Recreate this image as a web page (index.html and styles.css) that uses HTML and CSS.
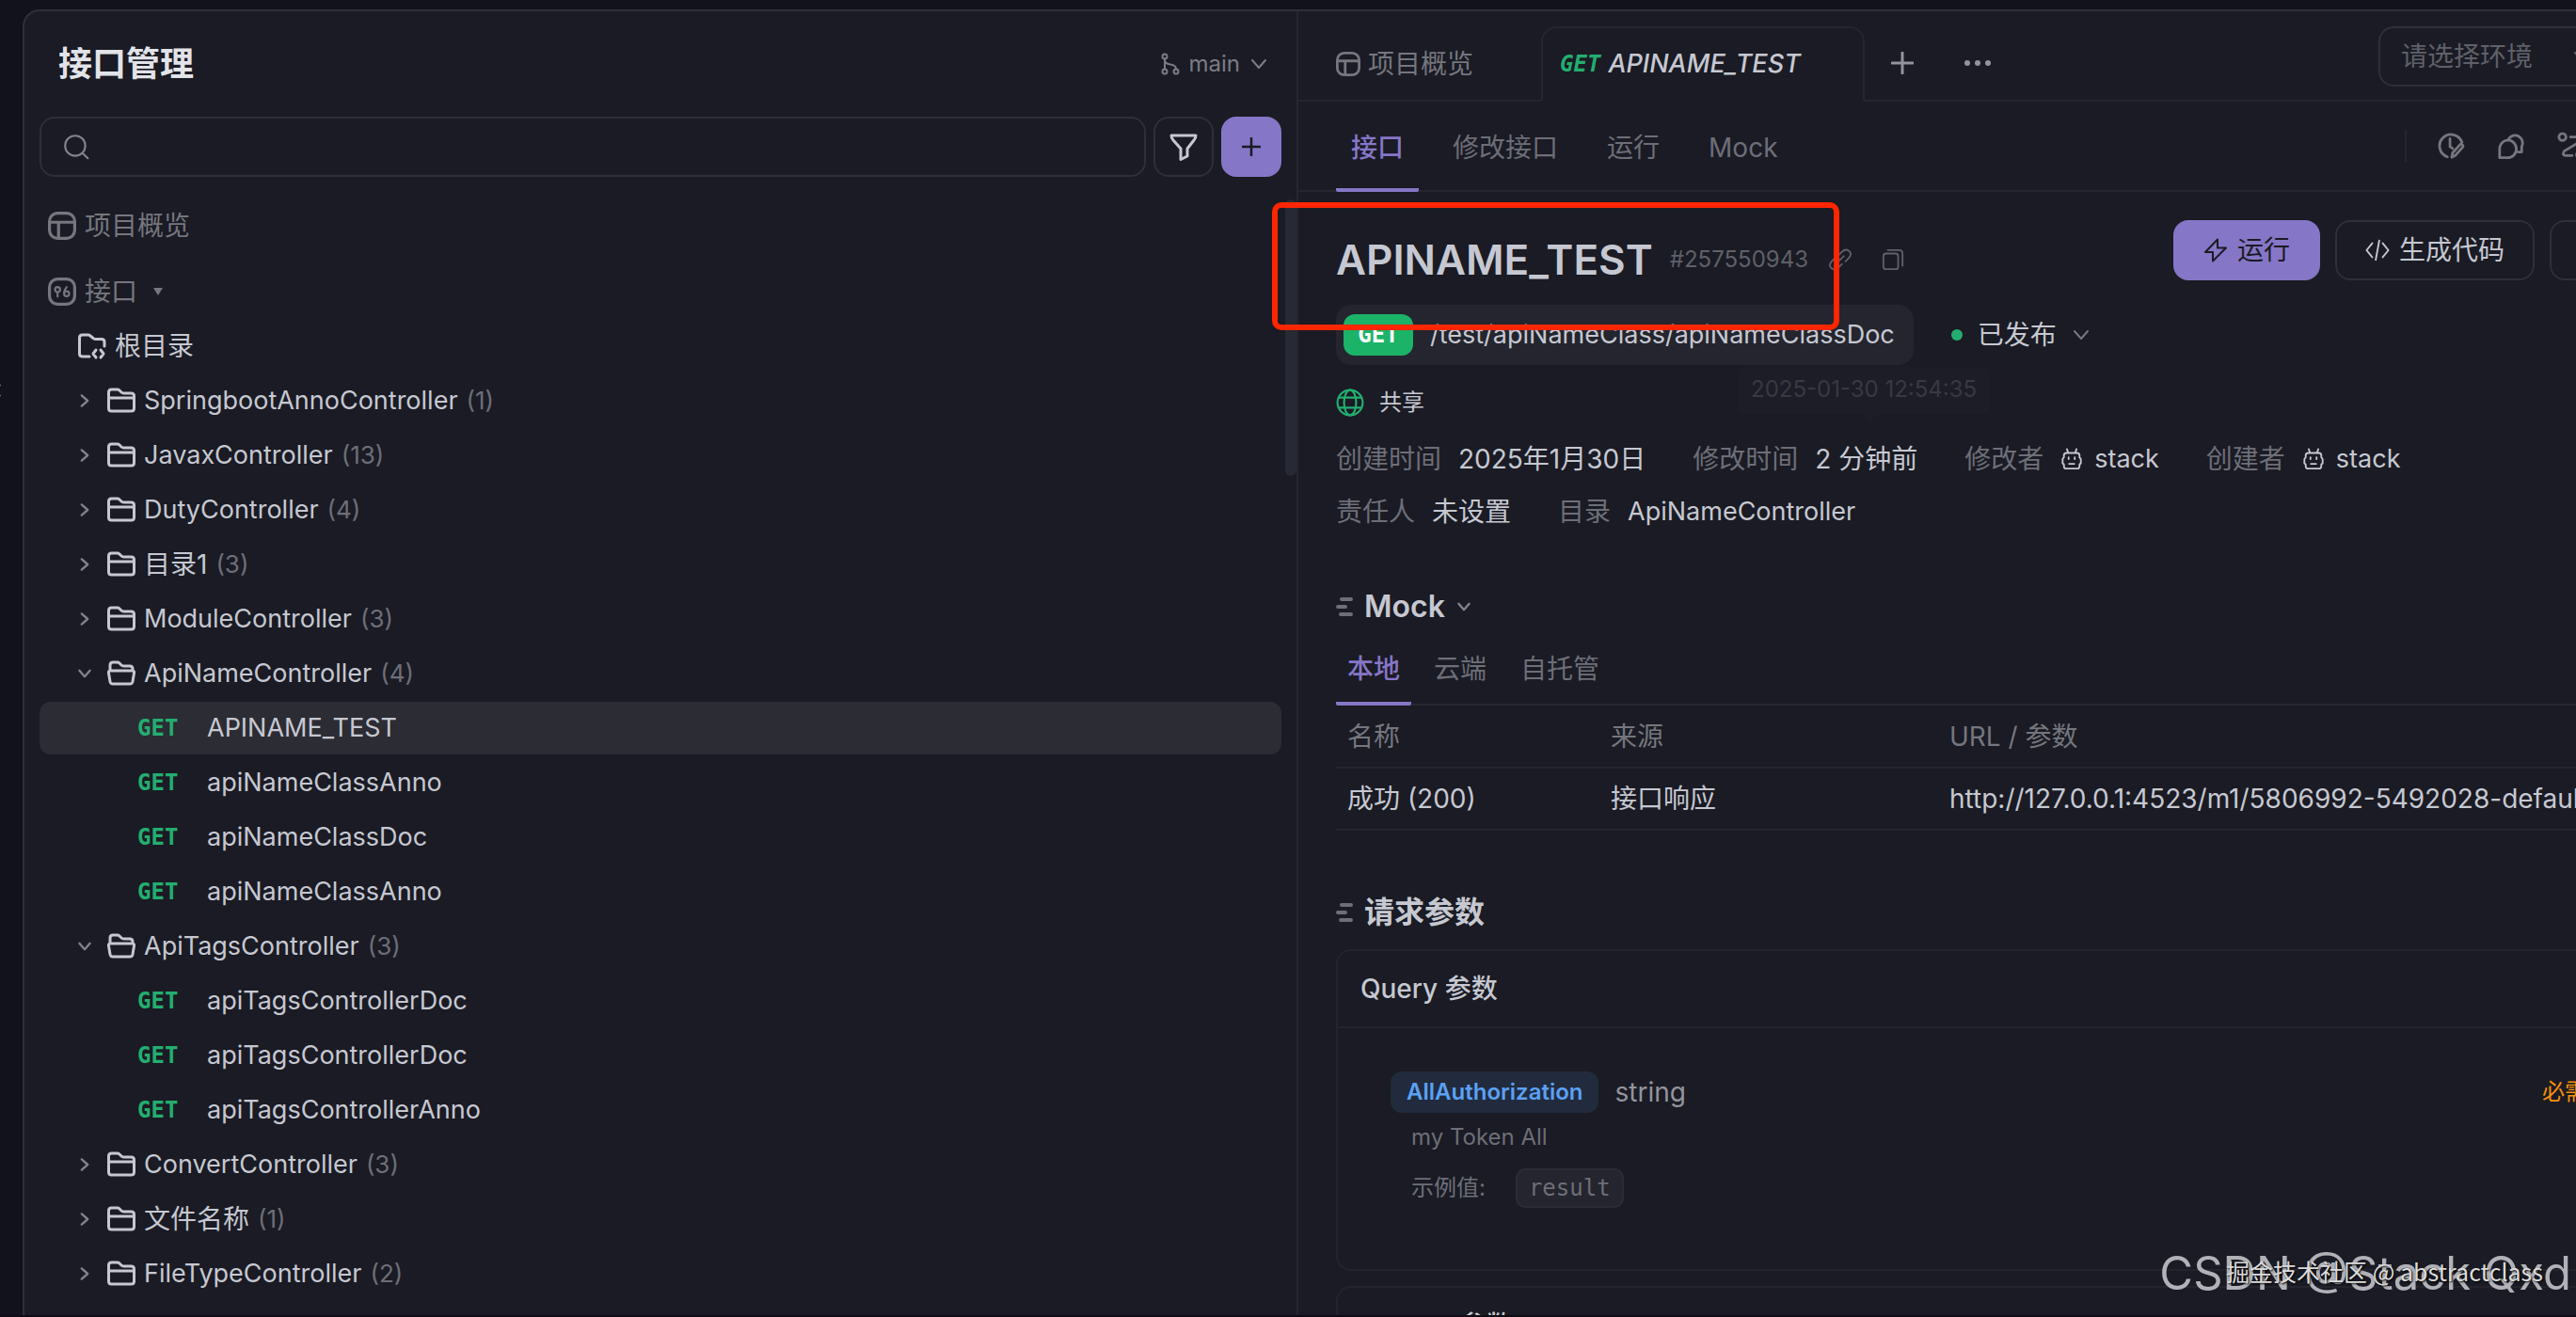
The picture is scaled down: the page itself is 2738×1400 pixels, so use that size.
FILE: index.html
```html
<!DOCTYPE html>
<html lang="zh-CN">
<head>
    <meta charset="UTF-8">
    <meta name="viewport" content="width=device-width, initial-scale=1.0">
    <title>接口管理</title>
    <link rel="stylesheet" href="styles.css">
</head>
<body>
    <!-- 图标 -->
    <svg class="icon-defs" aria-hidden="true">
        <symbol id="i-layout" viewBox="0 0 28 28"><rect x="1.5" y="1.5" width="25" height="25" rx="8"/><path d="M1.5 10.5h25M10.5 10.5v16"/></symbol>
        <symbol id="i-api" viewBox="0 0 28 28"><rect x="1.5" y="1.5" width="25" height="25" rx="8"/><g stroke-width="2"><circle cx="9.5" cy="12" r="2.5"/><path d="M9.5 14.5V19M18.5 9.500q-2.500 3-2.500 6"/><circle cx="18.5" cy="16" r="2.5"/></g></symbol>
        <symbol id="i-branch" viewBox="0 0 20 24"><circle cx="4" cy="4" r="2.5"/><circle cx="4" cy="20" r="2.5"/><circle cx="16" cy="20" r="2.5"/><path d="M4 6.5v11M4 8c0 3 2 4 6 4.500s6 2 6 5"/></symbol>
        <symbol id="i-down" viewBox="0 0 20 20"><path d="M3 6l7 8 7-8"/></symbol>
        <symbol id="i-right" viewBox="0 0 20 20"><path d="M6 3l8 7-8 7"/></symbol>
        <symbol id="i-search" viewBox="0 0 28 28"><circle cx="13" cy="13" r="10"/><path d="M20.5 20.5l5 5"/></symbol>
        <symbol id="i-filter" viewBox="0 0 30 30"><path d="M2 3h26q0 3-2 5l-7 9v8l-7 3.500V17L4 8Q2 6 2 3z"/></symbol>
        <symbol id="i-plus" viewBox="0 0 24 24"><path d="M12 1v22M1 12h22"/></symbol>
        <symbol id="i-folder" viewBox="0 0 30 28"><path d="M1.5 22V5q0-3 3-3h6q1.500 0 2.500 1l2 2q1 1 2.500 1h8q3 0 3 3v13q0 3-3 3h-21q-3 0-3-3zM1.500 11h27"/></symbol>
        <symbol id="i-open" viewBox="0 0 30 28"><path d="M3 11V5q0-3 3-3h4.500q1.500 0 2.500 1l2 2q1 1 2.500 1H24q3 0 3 3v2M3.500 11h23q2.500 0 2 2.500l-1.500 9q-.5 2.500-3 2.500H6q-2.500 0-3-2.500l-1.500-9Q1 11 3.500 11z"/></symbol>
        <symbol id="i-root" viewBox="0 0 30 28"><path d="M12 25H5q-3.500 0-3.500-3V5q0-3 3-3h6q1.500 0 2.500 1l3 2.500q1 1 2.500 1H25q3 0 3 3V14M19 18l-3 4 3 4M24 18l3 4-3 4"/></symbol>
        <symbol id="i-dots" viewBox="0 0 30 10"><g fill="currentColor" stroke="none"><circle cx="4" cy="5" r="3"/><circle cx="15" cy="5" r="3"/><circle cx="26" cy="5" r="3"/></g></symbol>
        <symbol id="i-history" viewBox="0 0 32 32"><path d="M12 28.500A13 13 0 1 1 28.500 12M15 8v9l3 2M17 29l1-5 8-9q1.500-1.500 3 0t0 3l-8 9z"/></symbol>
        <symbol id="i-chat" viewBox="0 0 32 32"><path d="M12 9.500a10 10 0 1 1 0 20H3V20a10 10 0 0 1 9-10.500zM13 8.500A8.500 8.500 0 1 1 28 17v6h-4"/></symbol>
        <symbol id="i-flow" viewBox="0 0 32 32"><circle cx="6" cy="6" r="4"/><circle cx="26" cy="26" r="4"/><path d="M15 6h9q5 0 4 4L8 22q-3 5 2 5h7"/></symbol>
        <symbol id="i-bolt" viewBox="0 0 26 26"><path d="M15 1.500L2 15h8v9.500L24 10.500h-9z"/></symbol>
        <symbol id="i-code" viewBox="0 0 28 26"><path d="M8 5l-6.500 8L8 21M20 5l6.500 8L20 21M16 2l-4 22"/></symbol>
        <symbol id="i-link" viewBox="0 0 26 26"><path d="M11 8l4-4q4-4 8-1t0 8l-4 4M15 18l-4 4q-4 4-8 1t0-8l4-4M9 17l8-8"/></symbol>
        <symbol id="i-copy" viewBox="0 0 26 26"><rect x="2" y="6" width="17" height="18" rx="3"/><path d="M7 2h13q4 0 4 4v14"/></symbol>
        <symbol id="i-globe" viewBox="0 0 28 28"><circle cx="14" cy="14" r="12.5"/><ellipse cx="14" cy="14" rx="6" ry="12.5"/><path d="M3 9h22M3 19h22"/></symbol>
        <symbol id="i-robot" viewBox="0 0 24 26"><path d="M8 6L6.500 1.500M16 6l1.500-4.500M6 6h12q3 0 3 3v2l1.500 2v5L21 19v2q0 3-3 3H6q-3 0-3-3v-2l-1.500-1v-5L3 11V9q0-3 3-3zM8.500 11v2M15.500 11v2M9 18.500h6"/></symbol>
        <symbol id="i-anchor" viewBox="0 0 18 22"><path d="M6 3h10M2 11h8M5 19h11"/></symbol>
        <symbol id="i-caret" viewBox="0 0 10 10"><path d="M0 1h10L5 9z" fill="currentColor" stroke="none"/></symbol>
    </svg>

    <div class="rail-toggle"><svg class="icon"><use href="#i-down"/></svg></div>
    <div class="panel">
        <aside class="sidebar">
            <header class="side-head">
                <h1>接口管理</h1>
                <button class="branch"><svg class="icon w20 tall"><use href="#i-branch"/></svg>main<svg class="icon w20"><use href="#i-down"/></svg></button>
            </header>
            <div class="search-row">
                <label class="search"><svg class="icon w30 thin"><use href="#i-search"/></svg><input type="text" aria-label="搜索"></label>
                <button class="square" aria-label="筛选"><svg class="icon w30"><use href="#i-filter"/></svg></button>
                <button class="square primary" aria-label="新建"><svg class="icon w20 bold"><use href="#i-plus"/></svg></button>
            </div>
            <nav class="tree">
                <a class="top-item" href="#"><svg class="icon w30"><use href="#i-layout"/></svg>项目概览</a>
                <a class="top-item" href="#"><svg class="icon w30"><use href="#i-api"/></svg>接口<svg class="icon w10"><use href="#i-caret"/></svg></a>
                <a class="row root" href="#"><svg class="icon w30"><use href="#i-root"/></svg>根目录</a>
                <a class="row" href="#"><svg class="icon arrow"><use href="#i-right"/></svg><svg class="icon w30"><use href="#i-folder"/></svg><span class="latin">SpringbootAnnoController</span><small>(1)</small></a>
                <a class="row" href="#"><svg class="icon arrow"><use href="#i-right"/></svg><svg class="icon w30"><use href="#i-folder"/></svg><span class="latin">JavaxController</span><small>(13)</small></a>
                <a class="row" href="#"><svg class="icon arrow"><use href="#i-right"/></svg><svg class="icon w30"><use href="#i-folder"/></svg><span class="latin">DutyController</span><small>(4)</small></a>
                <a class="row" href="#"><svg class="icon arrow"><use href="#i-right"/></svg><svg class="icon w30"><use href="#i-folder"/></svg>目录1<small>(3)</small></a>
                <a class="row" href="#"><svg class="icon arrow"><use href="#i-right"/></svg><svg class="icon w30"><use href="#i-folder"/></svg><span class="latin">ModuleController</span><small>(3)</small></a>
                <a class="row" href="#"><svg class="icon arrow"><use href="#i-down"/></svg><svg class="icon w30"><use href="#i-open"/></svg><span class="latin">ApiNameController</span><small>(4)</small></a>
                <a class="row api active" href="#"><b class="method">GET</b><span class="latin">APINAME_TEST</span></a>
                <a class="row api" href="#"><b class="method">GET</b><span class="latin">apiNameClassAnno</span></a>
                <a class="row api" href="#"><b class="method">GET</b><span class="latin">apiNameClassDoc</span></a>
                <a class="row api" href="#"><b class="method">GET</b><span class="latin">apiNameClassAnno</span></a>
                <a class="row" href="#"><svg class="icon arrow"><use href="#i-down"/></svg><svg class="icon w30"><use href="#i-open"/></svg><span class="latin">ApiTagsController</span><small>(3)</small></a>
                <a class="row api" href="#"><b class="method">GET</b><span class="latin">apiTagsControllerDoc</span></a>
                <a class="row api" href="#"><b class="method">GET</b><span class="latin">apiTagsControllerDoc</span></a>
                <a class="row api" href="#"><b class="method">GET</b><span class="latin">apiTagsControllerAnno</span></a>
                <a class="row" href="#"><svg class="icon arrow"><use href="#i-right"/></svg><svg class="icon w30"><use href="#i-folder"/></svg><span class="latin">ConvertController</span><small>(3)</small></a>
                <a class="row" href="#"><svg class="icon arrow"><use href="#i-right"/></svg><svg class="icon w30"><use href="#i-folder"/></svg>文件名称<small>(1)</small></a>
                <a class="row" href="#"><svg class="icon arrow"><use href="#i-right"/></svg><svg class="icon w30"><use href="#i-folder"/></svg><span class="latin">FileTypeController</span><small>(2)</small></a>
                <a class="row" href="#"><svg class="icon arrow"></svg><svg class="icon w30"><use href="#i-folder"/></svg></a>
                <div class="scrollbar"></div>
            </nav>
        </aside>

        <main class="main">
            <div class="tabs">
                <button class="tab"><svg class="icon w26"><use href="#i-layout"/></svg>项目概览</button>
                <button class="tab current"><b class="method">GET</b><span class="latin">APINAME_TEST</span></button>
                <button class="tab-tool" aria-label="新标签"><svg class="icon w24 bold"><use href="#i-plus"/></svg></button>
                <button class="tab-tool" aria-label="更多"><svg class="icon w30"><use href="#i-dots"/></svg></button>
                <div class="env">
                    <select aria-label="环境"><option>请选择环境</option></select>
                    <svg class="icon w20"><use href="#i-down"/></svg>
                </div>
            </div>
            <div class="sub-tabs">
                <button class="sub-tab on">接口</button>
                <button class="sub-tab">修改接口</button>
                <button class="sub-tab">运行</button>
                <button class="sub-tab">Mock</button>
                <div class="tools">
                    <button aria-label="历史"><svg class="icon w30"><use href="#i-history"/></svg></button>
                    <button aria-label="评论"><svg class="icon w30"><use href="#i-chat"/></svg></button>
                    <button aria-label="流程"><svg class="icon w30"><use href="#i-flow"/></svg></button>
                </div>
            </div>

            <div class="content">
                <section class="head">
                    <div class="head-info">
                        <div class="name-row">
                            <h2>APINAME_TEST</h2>
                            <span class="api-id">#257550943</span>
                            <svg class="icon w24"><use href="#i-link"/></svg>
                            <svg class="icon w24"><use href="#i-copy"/></svg>
                        </div>
                        <div class="path-row">
                            <div class="path"><b class="badge">GET</b><span class="latin">/test/apiNameClass/apiNameClassDoc</span></div>
                            <button class="status"><i class="dot"></i>已发布<svg class="icon w20"><use href="#i-down"/></svg></button>
                        </div>
                    </div>
                    <div class="actions">
                        <button class="btn primary"><svg class="icon w26 thin"><use href="#i-bolt"/></svg>运行</button>
                        <button class="btn"><svg class="icon w26 thin"><use href="#i-code"/></svg>生成代码</button>
                        <button class="btn more" aria-label="更多操作"></button>
                    </div>
                </section>
                <div class="share">
                    <svg class="icon w30 thin"><use href="#i-globe"/></svg>共享
                    <div class="tooltip">2025-01-30 12:54:35</div>
                </div>
                <dl class="meta">
                    <div><dt>创建时间</dt><dd>2025年1月30日</dd></div>
                    <div><dt>修改时间</dt><dd>2 分钟前</dd></div>
                    <div><dt>修改者</dt><dd><svg class="icon w24"><use href="#i-robot"/></svg><span class="latin">stack</span></dd></div>
                    <div><dt>创建者</dt><dd><svg class="icon w24"><use href="#i-robot"/></svg><span class="latin">stack</span></dd></div>
                </dl>
                <dl class="meta">
                    <div><dt>责任人</dt><dd>未设置</dd></div>
                    <div><dt>目录</dt><dd><span class="latin">ApiNameController</span></dd></div>
                </dl>

                <h3 class="mock-title"><svg class="icon anchor"><use href="#i-anchor"/></svg>Mock<svg class="icon arrow"><use href="#i-down"/></svg></h3>
                <div class="mock-tabs">
                    <button class="mock-tab on">本地</button>
                    <button class="mock-tab">云端</button>
                    <button class="mock-tab">自托管</button>
                </div>
                <table class="mock-table">
                    <thead>
                        <tr><th class="col-name">名称</th><th class="col-source">来源</th><th>URL / 参数</th></tr>
                    </thead>
                    <tbody>
                        <tr><td>成功 (200)</td><td>接口响应</td><td>http://127.0.0.1:4523/m1/5806992-5492028-default</td></tr>
                    </tbody>
                </table>

                <h3 class="params-title"><svg class="icon anchor"><use href="#i-anchor"/></svg>请求参数</h3>
                <section class="card">
                    <h4>Query 参数</h4>
                    <div class="card-body">
                        <div class="param">
                            <span class="param-name">AllAuthorization</span>
                            <span class="param-type">string</span>
                            <span class="required">必需</span>
                        </div>
                        <p class="param-desc">my Token All</p>
                        <p class="param-desc">示例值:<code>result</code></p>
                    </div>
                </section>
                <section class="card">
                    <h4>Header 参数</h4>
                    <div class="card-body"></div>
                </section>
            </div>
            <div class="mark"></div>
        </main>
    </div>
    <div class="watermark csdn">CSDN @Stack Qxd</div>
    <div class="watermark juejin">掘金技术社区 @ abstractclass</div>
</body>
</html>
```

FILE: styles.css
```css
*{
    box-sizing: border-box;
}
body{
    margin: 0;
    height: 100vh;
    padding: 10px 0 0 24px;
    overflow: hidden;
    position: relative;
    display: flex;
    background-color: #11121b;
    border-bottom: 2px solid #110c14;
    color: #c6c8d1;
    font-family: Inter, "Noto Sans CJK SC", sans-serif;
    font-size: 28px;
    line-height: 40px;
}
h1, h2, h3, h4, dl, dd, p{
    margin: 0;
}
button, input, select{
    font: inherit;
    color: inherit;
    background: none;
    border: none;
    padding: 0;
    outline: none;
}
button{
    display: flex;
    align-items: center;
    white-space: nowrap;
    cursor: pointer;
}
a{
    color: inherit;
    text-decoration: none;
}
.latin{
    font-size: 27px;
}

/* 图标 */
.icon-defs{
    position: absolute;
    width: 0;
    height: 0;
}
.icon{
    flex: none;
    fill: none;
    stroke: currentColor;
    stroke-width: 2;
    stroke-linecap: round;
    stroke-linejoin: round;
    width: 16px;
    height: 16px;
}
.w10{ width: 10px; height: 10px; }
.w20{ width: 20px; height: 20px; }
.w24{ width: 24px; height: 24px; }
.w26{ width: 26px; height: 26px; stroke-width: 3; }
.w30{ width: 30px; height: 30px; stroke-width: 3; }
.bold{ stroke-width: 3; }
.thin{ stroke-width: 2; }
.tall{ height: 24px; }
.arrow{
    width: 16px;
    height: 16px;
    stroke-width: 3;
    color: #81828b;
}
.anchor{
    width: 18px;
    height: 22px;
    stroke-width: 4;
    color: #6d6e78;
}
.method{
    color: #23ae70;
    font-family: "DejaVu Sans Mono", monospace;
    font-size: 24px;
}
.rail-toggle{
    position: absolute;
    left: -10px;
    top: 406px;
    color: #6d6e78;
    line-height: 16px;
    rotate: 90deg;
}

.panel{
    flex: 1;
    min-width: 0;
    display: flex;
    overflow: hidden;
    background-color: #1a1b24;
    border: solid #2e2f38;
    border-width: 2px 0 0 2px;
    border-radius: 18px 0 0 0;
}

/* 左侧 */
.sidebar{
    flex: none;
    width: calc(50% - 2px);
    display: flex;
    flex-direction: column;
    border-right: 2px solid #25262e;
}
.side-head{
    height: 112px;
    flex: none;
    display: flex;
    align-items: center;
    justify-content: space-between;
    padding: 0 30px 0 36px;
}
.side-head h1{
    font-size: 36px;
    font-weight: 600;
    color: #e2e3e8;
}
.branch{
    gap: 10px;
    font-size: 24px;
    color: #7b7c85;
}
.search-row{
    display: flex;
    gap: 8px;
    padding: 0 16px;
}
.search, .square{
    height: 64px;
    border: 2px solid #2e2f38;
    border-radius: 16px;
}
.search{
    flex: 1;
    display: flex;
    align-items: center;
    gap: 12px;
    padding: 0 22px;
    color: #81828b;
}
.search input{
    flex: 1;
}
.square{
    width: 64px;
    justify-content: center;
}
.primary{
    background-color: #8676c7;
    border-color: #8676c7;
    color: #1a1b24;
}
.tree{
    flex: 1;
    min-height: 0;
    overflow: hidden;
    position: relative;
    margin-top: 24px;
    padding: 0 16px;
}
.top-item{
    height: 56px;
    margin-bottom: 14px;
    padding-left: 9px;
    display: flex;
    align-items: center;
    gap: 9px;
    color: #75767e;
}
.top-item + .top-item{
    margin-bottom: 2px;
}
.top-item .w10{
    margin-left: 8px;
}
.row{
    height: 56px;
    margin-bottom: 2px;
    padding-left: 40px;
    border-radius: 12px;
    display: flex;
    align-items: center;
}
.row .arrow{
    margin-right: 16px;
}
.row .w30{
    margin-right: 9px;
}
.row small{
    margin-left: 9px;
    font-size: 26px;
    color: #6d6e78;
}
.root{
    padding-left: 41px;
}
.api{
    padding-left: 104px;
}
.api .method{
    width: 74px;
}
.active{
    background-color: #2b2c34;
}
.scrollbar{
    position: absolute;
    top: 0;
    right: 0;
    width: 12px;
    height: 294px;
    border-radius: 6px;
    background-color: #272935;
}

/* 右侧，超出窗口的部分被裁掉 */
.main{
    flex: 1;
    min-width: 0;
    position: relative;
    margin-right: -160px;
}
.tabs{
    height: 96px;
    display: flex;
    align-items: flex-end;
    border-bottom: 2px solid #25262e;
    padding-right: 120px;
}
.tab{
    height: 80px;
    gap: 8px;
    padding: 4px 72px 0 40px;
    color: #75767e;
}
.current{
    margin-bottom: -2px;
    padding: 0 66px 0 18px;
    border: 2px solid #25262e;
    border-bottom-color: #1a1b24;
    border-radius: 16px 16px 0 0;
    background-color: #1a1b24;
    color: #c6c8d1;
    font-style: italic;
    font-weight: 500;
}
.tab-tool{
    height: 80px;
    width: 80px;
    padding-top: 2px;
    justify-content: center;
    color: #92939b;
}
.env{
    align-self: flex-start;
    margin: 16px 0 0 auto;
    width: 250px;
    height: 64px;
    position: relative;
    display: flex;
    align-items: center;
    border: 2px solid #2e2f38;
    border-radius: 16px;
    color: #5f6069;
}
.env select{
    flex: 1;
    height: 60px;
    padding-left: 22px;
    appearance: none;
}
.env .icon{
    position: absolute;
    right: 22px;
    pointer-events: none;
}
.sub-tabs{
    height: 96px;
    display: flex;
    gap: 20px;
    padding: 0 40px;
    border-bottom: 2px solid #25262e;
}
.sub-tab, .mock-tab{
    padding: 6px 16px 0;
    border-bottom: 4px solid transparent;
    color: #6d6e78;
}
.sub-tab{
    height: 96px;
}
.sub-tab.on, .mock-tab.on{
    color: #8676c7;
    font-weight: 500;
    border-bottom-color: #8676c7;
    border-radius: 2px;
}
.tools{
    align-self: center;
    margin-left: auto;
    width: 302px;
    display: flex;
    gap: 34px;
    padding-left: 32px;
    border-left: 2px solid #25262e;
    color: #75767e;
    height: 34px;
}

.content{
    padding: 30px 40px 0 40px;
}
.head{
    display: flex;
    justify-content: space-between;
    align-items: flex-start;
}
.name-row{
    height: 84px;
    display: flex;
    align-items: center;
    color: #5f6069;
}
.name-row h2{
    font-size: 44px;
    font-weight: 600;
    color: #c6c8d1;
}
.api-id{
    font-size: 24px;
    margin: 0 22px 0 18px;
}
.name-row .icon{
    margin-right: 32px;
}
.path-row{
    margin-top: 6px;
    display: flex;
    gap: 40px;
}
.path{
    height: 64px;
    padding: 0 20px 0 8px;
    display: flex;
    align-items: center;
    gap: 18px;
    border-radius: 16px;
    background-color: #24252e;
}
.badge{
    width: 74px;
    height: 44px;
    line-height: 44px;
    text-align: center;
    border-radius: 12px;
    background-color: #1bb368;
    color: #fff;
    font-family: "DejaVu Sans Mono", monospace;
    font-size: 24px;
}
.status{
    gap: 16px;
}
.status .icon{
    color: #75767e;
}
.dot{
    width: 12px;
    height: 12px;
    border-radius: 50%;
    background-color: #23ae70;
}
.actions{
    display: flex;
    gap: 16px;
}
.btn{
    height: 64px;
    padding: 0 30px;
    gap: 10px;
    border: 2px solid #2e2f38;
    border-radius: 16px;
}
.btn.primary{
    border-color: #8676c7;
}
.more{
    width: 148px;
}
.share{
    position: relative;
    height: 48px;
    margin: 16px 0 8px;
    display: flex;
    align-items: center;
    gap: 16px;
    font-size: 24px;
}
.share .icon{
    color: #23ae70;
}
.tooltip{
    position: absolute;
    left: 427px;
    top: -14px;
    padding: 4px 14px 6px;
    border-radius: 8px;
    background-color: #1c1d26;
    color: #383942;
}
.tooltip::after{
    content: "";
    position: absolute;
    left: 50%;
    top: 100%;
    border: 8px solid transparent;
    border-top-color: #1c1d26;
}
.meta{
    height: 56px;
    display: flex;
    align-items: center;
    gap: 50px;
    white-space: nowrap;
}
.meta div, .meta dd{
    display: flex;
    align-items: center;
}
.meta div{
    gap: 18px;
}
.meta dd{
    gap: 12px;
}
.meta dt{
    color: #6d6e78;
}
h3{
    height: 50px;
    display: flex;
    align-items: center;
    gap: 12px;
    font-size: 32px;
    font-weight: 600;
}
.mock-title{
    margin-top: 48px;
}
.params-title{
    margin: 62px 0 14px;
}
.mock-tabs{
    display: flex;
    gap: 12px;
    height: 80px;
    box-shadow: inset 0 -2px #25262e;
}
.mock-tab{
    height: 80px;
    padding: 6px 12px 0;
}
.mock-table{
    width: 100%;
    table-layout: fixed;
    border-collapse: collapse;
}
.mock-table th, .mock-table td{
    height: 66px;
    padding: 0 12px;
    text-align: left;
    white-space: nowrap;
    border-bottom: 2px solid #23242c;
}
.mock-table th{
    font-weight: 400;
    color: #75767e;
}
.col-name{
    width: 280px;
}
.col-source{
    width: 360px;
}
.card{
    margin-bottom: 16px;
    border: 2px solid #23242c;
    border-radius: 16px;
}
.card h4{
    padding: 20px 24px;
    font-size: 28px;
    font-weight: 500;
    border-bottom: 2px solid #23242c;
}
.card-body{
    padding: 46px 56px 56px;
}
.param{
    display: flex;
    align-items: center;
    gap: 17px;
    margin-bottom: 2px;
}
.param-name{
    height: 44px;
    line-height: 44px;
    padding: 0 17px;
    border-radius: 12px;
    background-color: #212b3d;
    color: #5ba1f5;
    font-size: 24px;
    font-weight: 600;
}
.param-type{
    color: #93949d;
}
.required{
    margin-left: auto;
    width: 98px;
    font-size: 24px;
    color: #f79009;
}
.param-desc{
    height: 48px;
    margin-bottom: 6px;
    padding-left: 22px;
    display: flex;
    align-items: center;
    font-size: 24px;
    color: #6d6e78;
}
.param-desc code{
    height: 42px;
    line-height: 38px;
    margin-left: 32px;
    padding: 0 12px;
    border: 2px solid #2b2c34;
    border-radius: 10px;
    background-color: #24252e;
    font-family: "DejaVu Sans Mono", monospace;
}

/* 红框标注 */
.mark{
    position: absolute;
    left: -28px;
    top: 203px;
    width: 603px;
    height: 136px;
    border: 6px solid #ff2600;
    border-radius: 10px;
}
.watermark{
    position: absolute;
    white-space: nowrap;
}
.csdn{
    right: 5px;
    bottom: 14px;
    font-size: 49px;
    line-height: 60px;
    color: rgba(205, 205, 210, 0.85);
}
.juejin{
    right: 35px;
    bottom: 27px;
    font-family: "Noto Sans CJK SC", sans-serif;
    font-size: 25px;
    line-height: 40px;
    color: #dcdcdc;
    text-shadow: 1px 1px 2px #000;
}
```
